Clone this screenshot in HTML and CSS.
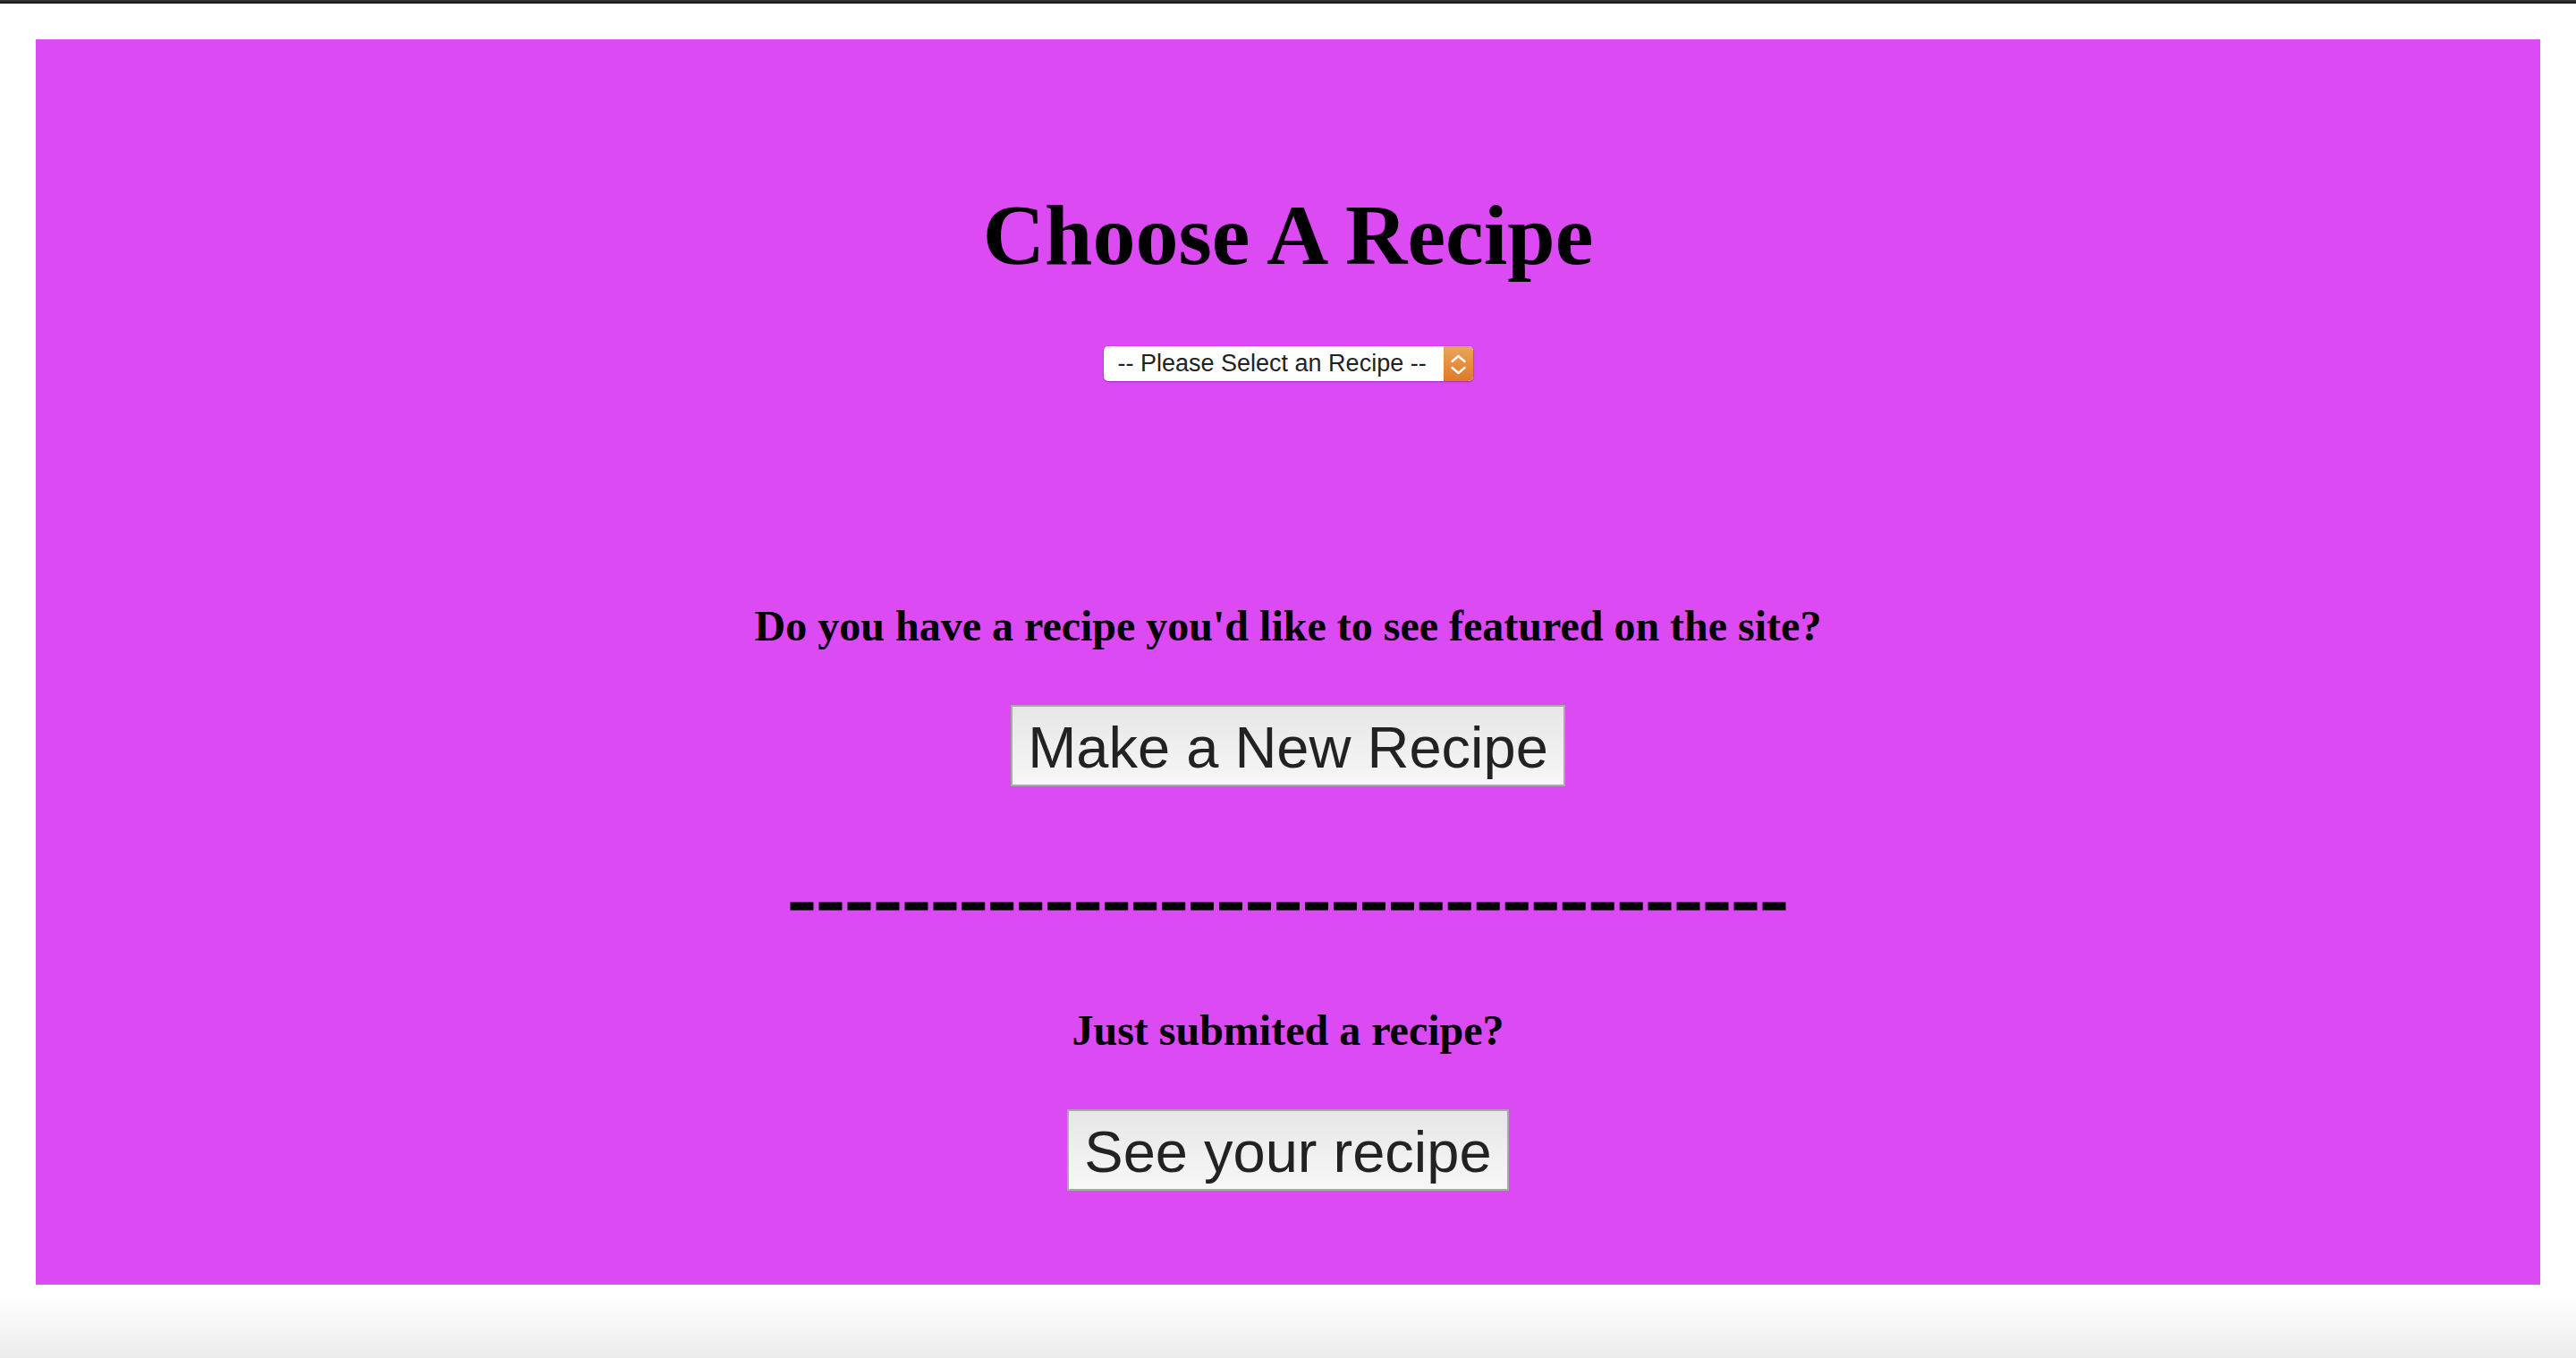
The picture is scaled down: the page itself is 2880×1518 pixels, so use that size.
FILE: index.html
```html
<!DOCTYPE html>
<html lang="en">
<head>
<meta charset="utf-8">
<title>Choose A Recipe</title>
<link rel="stylesheet" href="styles.css">
</head>
<body>
<div class="topbar"></div>
<main class="page">
  <section class="panel">
    <h1 class="title">Choose A Recipe</h1>
    <div class="select">
      <span class="select-label">-- Please Select an Recipe --</span>
      <span class="stepper">
        <svg width="33" height="39" viewBox="0 0 33 39" aria-hidden="true">
          <polyline points="9.5,17 16.5,11 23.5,17" fill="none" stroke="#fff" stroke-width="2.4" stroke-linecap="round" stroke-linejoin="round"/>
          <polyline points="9.5,24 16.5,30 23.5,24" fill="none" stroke="#fff" stroke-width="2.4" stroke-linecap="round" stroke-linejoin="round"/>
        </svg>
      </span>
    </div>
    <h2 class="question">Do you have a recipe you'd like to see featured on the site?</h2>
    <button class="btn btn-first" type="button">Make a New Recipe</button>
    <h1 class="divider">-----------------------------------</h1>
    <h2 class="question question-second">Just submited a recipe?</h2>
    <button class="btn btn-second" type="button">See your recipe</button>
  </section>
</main>
<div class="window-bottom"></div>
</body>
</html>
```

FILE: styles.css
```css
html, body {
  margin: 0;
  padding: 0;
  background: #ffffff;
}

body {
  width: 2880px;
  height: 1518px;
  overflow: hidden;
  font-family: "Liberation Serif", "Times New Roman", serif;
  display: flex;
  flex-direction: column;
}

.topbar {
  height: 4px;
  background: linear-gradient(#3a3a3a, #111111);
  flex: none;
}

.page {
  padding: 40px 40px 0 40px;
  flex: none;
}

.panel {
  background: #dc4af4;
  display: flex;
  flex-direction: column;
  align-items: center;
  padding: 164px 0 105px 0;
}

.title {
  margin: 0;
  font-family: "Liberation Serif", "Times New Roman", serif;
  font-weight: bold;
  font-size: 96px;
  line-height: 110px;
  color: #000;
}

.select {
  margin-top: 69px;
  width: 413px;
  height: 39px;
  box-sizing: border-box;
  display: flex;
  align-items: center;
  background: #ffffff;
  border-radius: 5px;
  box-shadow: 0 1px 2px rgba(80, 0, 100, 0.35), 0 0 0 1px rgba(120, 30, 140, 0.12);
  overflow: hidden;
}

.select-label {
  flex: 1;
  padding-left: 16px;
  font-family: "Liberation Sans", Arial, sans-serif;
  font-size: 27px;
  line-height: 39px;
  color: #222222;
  white-space: nowrap;
}

.stepper {
  width: 33px;
  height: 39px;
  flex: none;
  display: flex;
  background: linear-gradient(#e9a55c, #e07a28);
  border-radius: 0 5px 5px 0;
}

.question {
  margin: 246px 0 0 0;
  font-family: "Liberation Serif", "Times New Roman", serif;
  font-weight: bold;
  font-size: 48px;
  line-height: 56px;
  color: #000;
  white-space: nowrap;
}

.question-second {
  margin-top: 66px;
}

.btn {
  margin-top: 60px;
  padding: 8px 17px 4px 17px;
  border: 2px solid #a9a9a9;
  border-radius: 0;
  background: linear-gradient(#e6e6e6, #f7f7f7);
  font-family: "Liberation Sans", Arial, sans-serif;
  font-size: 65px;
  line-height: 75px;
  color: #222222;
  cursor: pointer;
}

.divider {
  margin: 69px 0 0 0;
  font-family: "Liberation Serif", "Times New Roman", serif;
  font-weight: bold;
  font-size: 96px;
  line-height: 110px;
  color: #000;
  white-space: nowrap;
  -webkit-text-stroke: 1px #000;
}

.window-bottom {
  flex: 1;
  background: linear-gradient(#ffffff 0%, #ffffff 15%, #f5f5f5 60%, #eaeaea 100%);
}
```
